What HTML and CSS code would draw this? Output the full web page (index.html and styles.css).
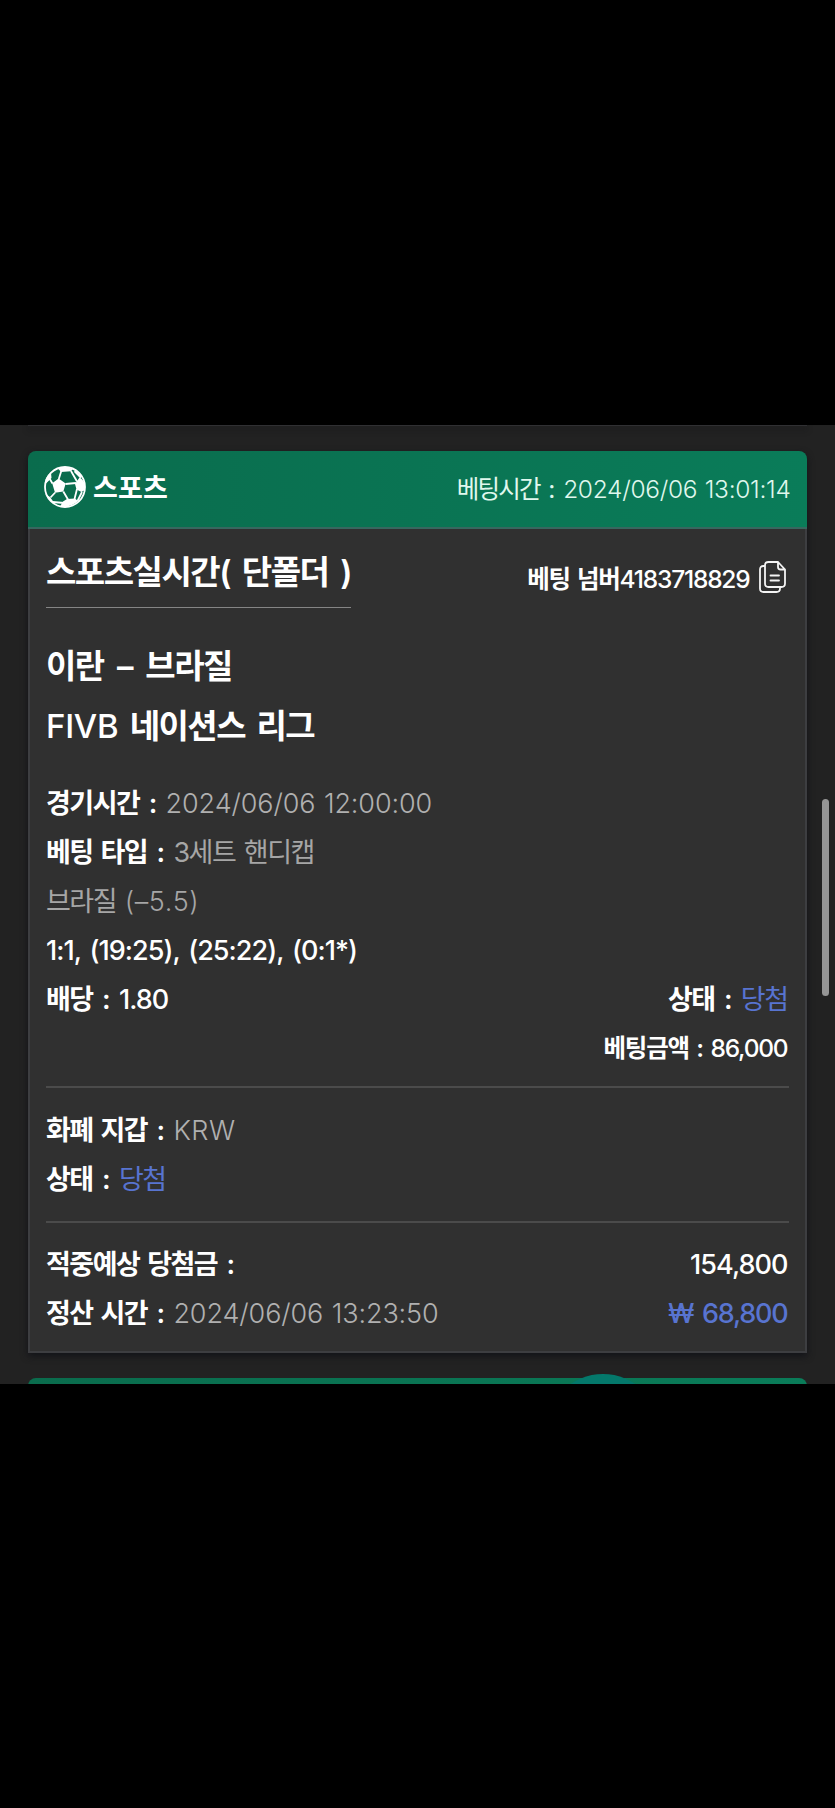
FILE: index.html
```
<!DOCTYPE html>
<html lang="ko">
<head>
<meta charset="utf-8">
<title>베팅 내역</title>
<link rel="stylesheet" href="styles.css">
</head>
<body>
<main class="viewport">
  <div class="card-previous"></div>
  <article class="card">
    <header class="card-header">
      <div class="sport">
        <svg class="ball" viewBox="0 0 42 42" fill="none" stroke="#fff">
          <circle cx="21" cy="21" r="20" stroke-width="1.8"/>
          <path fill="#fff" stroke="none" d="M8.200 17.300 14.600 12.500 21.700 17.600 19.300 25.500 11 26.800ZM14 2.500Q21 0 29 3L27 5.200 17 6ZM31 18 35.500 11.500Q39 13 41 18V24L37.500 26 32.500 23.500ZM19 35.500 23 33 31 32.500 34 35Q28 41.500 16 40.500ZM1.500 14Q3 9 7 6.500L7.500 12 2 17.500ZM1.500 28 6 31 11 38Q4 34 1.500 28ZM31 4 38 10 36.500 12.500 30 6Z"/>
          <path stroke-width="1.8" d="M14.800 13 17.300 5M8.500 17.500 5.500 12.500M21.500 18 32 17M19.300 25.500 24 33.500M11.200 26.500 6.500 31.500M27 5 33 15.500M33 23 30.500 33M33.500 35 38 26M9 36 20 37"/>
        </svg>
        <span class="sport-name">스포츠</span>
      </div>
      <div class="bet-time">베팅시간 <span class="colon">:</span> <time class="date">2024/06/06 13:01:14</time></div>
    </header>
    <div class="card-body">
      <div class="title-row">
        <h1 class="title">스포츠실시간( 단폴더 )</h1>
        <div class="bet-number">
          <span>베팅 넘버<span class="digits">4183718829</span></span>
          <svg class="copy" viewBox="0 0 27 32" fill="none" stroke="#f4f4f4" stroke-width="1.8" stroke-linejoin="round" stroke-linecap="round">
            <path d="M19 1H9.500Q6 1 6 4.500V22.500Q6 26 9.500 26H22.500Q26 26 26 22.500V8.500ZM19 1V6Q19 8.500 21.500 8.500H26M6 5H4.500Q1 5 1 8.500V27.500Q1 31 4.500 31H17.500Q21 31 21 27.500V26M11.500 14.500H20M11.500 19.500H20"/>
          </svg>
        </div>
      </div>
      <section class="match">
        <h2 class="teams">이란 – 브라질</h2>
        <h2 class="league"><span class="league-code">FIVB</span> 네이션스 리그</h2>
      </section>
      <section class="details">
        <div class="row"><span>경기시간 <span class="colon">:</span> <span class="value date">2024/06/06 12:00:00</span></span></div>
        <div class="row"><span>베팅 타입 <span class="colon">:</span> <span class="value">3세트 핸디캡</span></span></div>
        <div class="row"><span class="value">브라질 <span class="date handicap">(–5.5)</span></span></div>
        <div class="row"><span class="number">1:1, (19:25), (25:22), (0:1*)</span></div>
        <div class="row"><span>배당 <span class="colon">:</span> <span class="number">1.80</span></span><span>상태 <span class="colon">:</span> <span class="value win">당첨</span></span></div>
        <div class="row end"><span class="stake">베팅금액 : <span class="digits">86,000</span></span></div>
      </section>
      <section class="wallet">
        <div class="row"><span>화폐 지갑 <span class="colon">:</span> <span class="value date code">KRW</span></span></div>
        <div class="row"><span>상태 <span class="colon">:</span> <span class="value win">당첨</span></span></div>
      </section>
      <section class="result">
        <div class="row"><span>적중예상 당첨금 <span class="colon">:</span></span><span class="number">154,800</span></div>
        <div class="row"><span>정산 시간 <span class="colon">:</span> <span class="value date">2024/06/06 13:23:50</span></span><span class="number win">₩ 68,800</span></div>
      </section>
    </div>
  </article>
  <div class="card-next"></div>
  <div class="float-button"></div>
  <div class="scroll-thumb"></div>
</main>
</body>
</html>
```
FILE: styles.css
```
* { box-sizing: border-box; }
body {
  margin: 0;
  height: 1808px;
  padding-top: 425px;
  background: #000;
  color: #fff;
  font-family: Inter, "Noto Sans CJK KR", sans-serif;
}
.viewport {
  position: relative;
  height: 959px;
  padding: 0 28.5px 0 28px;
  overflow: hidden;
  background: #222;
}
.card-previous {
  height: 1px;
  margin-bottom: 24.5px;
  background: #303033;
  box-shadow: 0 3px 6px #0d0e12;
}
.card {
  height: 902.5px;
  border-radius: 8px 8px 0 0;
  box-shadow: 0 3px 7px #121318;
}
.card-header {
  height: 78.5px;
  padding: 0 16px;
  display: flex;
  justify-content: space-between;
  align-items: center;
  border-bottom: 2px solid #37675f;
  border-radius: 8px 8px 0 0;
  background: linear-gradient(90deg, #0a6c4d, #0a7c59);
}
.sport { display: flex; align-items: center; gap: 7px; margin-top: -4px; }
.ball { width: 42px; height: 42px; }
.sport-name { font-size: 27px; font-weight: 600; letter-spacing: .2px; }
.bet-time {
  margin-top: -2px;
  font-size: 24.5px;
  font-weight: 400;
  letter-spacing: -1.8px;
  word-spacing: 2.5px;
  color: #e0f8ee;
}
.bet-time .date { letter-spacing: -.3px; word-spacing: 1px; }
.card-body {
  height: 824px;
  padding: 0 16px;
  border: 2px solid #3d3e41;
  border-top-width: 0;
  background: #303030;
}
.title-row { display: flex; justify-content: space-between; }
.title {
  margin: 0;
  height: 79px;
  padding-top: 18px;
  border-bottom: 1px solid #858585;
  font-size: 33px;
  font-weight: 600;
  line-height: 50px;
  letter-spacing: -1.5px;
  word-spacing: 5px;
  white-space: nowrap;
}
.bet-number {
  display: flex;
  align-items: center;
  gap: 9px;
  height: 36px;
  margin-top: 30px;
  padding-right: 3px;
  font-size: 24.5px;
  font-weight: 600;
  letter-spacing: -1.3px;
  word-spacing: 2.5px;
}
.digits { font-weight: 500; letter-spacing: -1.2px; }
.copy { width: 27px; height: 32px; }
.match { padding-top: 28px; }
.teams, .league {
  margin: 0;
  font-size: 33px;
  font-weight: 600;
  line-height: 60px;
  letter-spacing: -1.5px;
  word-spacing: 6.5px;
}
.league { word-spacing: 4.5px; }
.league-code { font-weight: 500; letter-spacing: -.3px; }
.details { padding-top: 22.5px; height: 330px; }
.row {
  display: flex;
  justify-content: space-between;
  height: 49px;
  line-height: 49px;
  font-size: 27px;
  font-weight: 600;
  letter-spacing: -1.5px;
  word-spacing: 2.5px;
  white-space: nowrap;
}
.row.end { justify-content: flex-end; }
.row > :last-child:not(:first-child), .stake { margin-right: 1px; }
.colon { margin: 0 2px 0 1.5px; }
.bet-time .colon { margin: 0 2px 0 1px; }
.stake { font-size: 24.5px; letter-spacing: -1.2px; }
.number { font-weight: 500; letter-spacing: -.95px; }
.value { color: #a6a6a6; font-weight: 400; }
.date { font-weight: 300; letter-spacing: -.12px; word-spacing: 1px; }
.value.date { color: #b0b0b0; }
.value .handicap { letter-spacing: .65px; }
.value.code { letter-spacing: .5px; }
.win, .value.win { color: #5874d0; }
.number.win { letter-spacing: -1.2px; }
.wallet, .result { border-top: 2px solid #4b4b4b; }
.wallet { height: 135px; padding-top: 17.5px; }
.result { padding-top: 17px; }
.card-next {
  height: 77px;
  margin-top: 25px;
  border-radius: 8px 8px 0 0;
  background: linear-gradient(90deg, #0a6c4d, #0a7c59);
}
.float-button {
  position: absolute;
  left: 545px;
  top: 949px;
  width: 116px;
  height: 116px;
  border-radius: 50%;
  background: #04786b;
}
.scroll-thumb {
  position: absolute;
  right: 6px;
  top: 374px;
  width: 7px;
  height: 197px;
  border-radius: 4px;
  background: #969696;
}
```
